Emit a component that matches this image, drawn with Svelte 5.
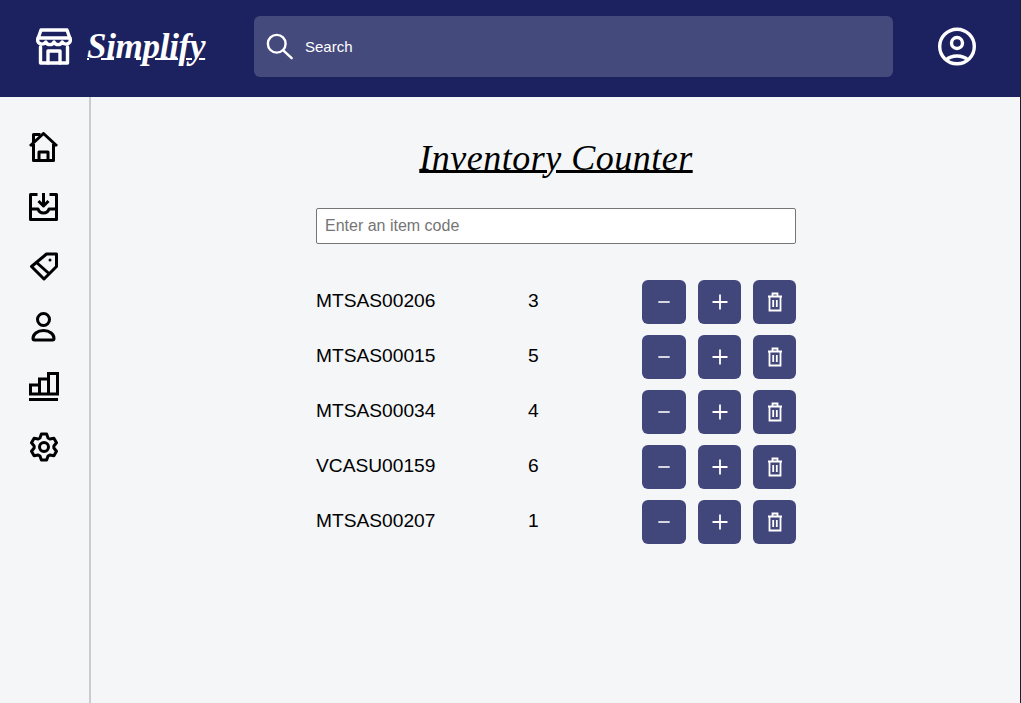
<script>
  const items = [
    { code: "MTSAS00206", qty: 3 },
    { code: "MTSAS00015", qty: 5 },
    { code: "MTSAS00034", qty: 4 },
    { code: "VCASU00159", qty: 6 },
    { code: "MTSAS00207", qty: 1 }
  ];

  // six-tooth cog outline, centred on 15,15
  function cog() {
    let d = "";
    for (let i = 0; i < 6; i++) {
      const a = (i * 60 - 90) * Math.PI / 180;
      const pts = [[-0.42, 9.9], [-0.2, 13.2], [0.2, 13.2], [0.42, 9.9]];
      for (const [off, r] of pts) {
        const x = 15 + r * Math.cos(a + off);
        const y = 15 + r * Math.sin(a + off);
        d += (d ? "L" : "M") + x.toFixed(2) + " " + y.toFixed(2);
      }
    }
    return d + "Z";
  }
</script>

<div class="page">
  <header class="topbar">
    <div class="brand">
      <svg class="store" viewBox="0 0 36 37" fill="none" stroke="currentColor" stroke-width="3.4" stroke-linejoin="round" stroke-linecap="round">
        <path d="M5 2h26l3.500 10a4.500 4.500 0 0 1-8.300 2a4.500 4.500 0 0 1-8.200 0a4.500 4.500 0 0 1-8.200 0a4.500 4.500 0 0 1-8.300-2z"/>
        <path d="M2 10h32"/>
        <path d="M4.500 19v16h27V19"/>
        <path d="M12 35V23h12v12"/>
      </svg>
      <span class="logo">Simplify</span>
    </div>
    <div class="search">
      <svg class="search-icon" viewBox="0 0 30 30" fill="none" stroke="currentColor" stroke-width="2.600" stroke-linecap="round">
        <circle cx="11.500" cy="11.500" r="9.500"/>
        <path d="M18.500 18.500L27.500 27"/>
      </svg>
      <span>Search</span>
    </div>
    <svg class="account" viewBox="0 0 38 39" fill="none" stroke="currentColor" stroke-width="3.400">
      <circle cx="19" cy="19.500" r="17.300"/>
      <circle cx="19" cy="16" r="5.500"/>
      <path d="M8 33c3-3 7-4 11-4s8 1 11 4"/>
    </svg>
  </header>

  <div class="body">
    <nav class="sidebar">
      <svg viewBox="0 0 30 30" fill="none" stroke="currentColor" stroke-width="3" stroke-linejoin="round">
        <path d="M1 14L14.500 1.500L28 14"/>
        <path d="M4.500 10V2.500h7"/>
        <path d="M4.500 12v16.500h20V12"/>
        <path d="M10 28.500V20h9v8.500"/>
      </svg>
      <svg viewBox="0 0 30 30" fill="none" stroke="currentColor" stroke-width="3" stroke-linejoin="round">
        <path d="M8.500 2.500H1.500v25h26v-25H20.500"/>
        <path d="M1.500 17H9c1 3 3 4 5.500 4s4.500-1 5.500-4h7.500"/>
        <path d="M14.500 1v13M9.500 9l5 5l5-5"/>
      </svg>
      <svg viewBox="0 0 30 30" fill="none" stroke="currentColor" stroke-width="3" stroke-linejoin="round">
        <path d="M27.500 2v12.500L15 27L2.500 14.500L17.500 2z"/>
        <path d="M7 10L20.500 22"/>
        <circle cx="21" cy="8" r="1.500" fill="currentColor" stroke="none"/>
      </svg>
      <svg viewBox="0 0 30 30" fill="none" stroke="currentColor" stroke-width="3">
        <circle cx="14.500" cy="7.500" r="6"/>
        <path d="M4 26.500c0-4 4-8 10.500-8s10.500 4 10.500 8c0 1-.5 1.500-1.500 1.500h-18c-1 0-1.500-.5-1.500-1.500z"/>
      </svg>
      <svg viewBox="0 0 30 30" fill="none" stroke="currentColor" stroke-width="3">
        <path d="M1.500 22V13h9v9zM10.500 22V7h9v15zM19.500 22V1.500h9V22z"/>
        <path d="M0 27.500h29"/>
      </svg>
      <svg viewBox="0 0 30 30" fill="none" stroke="currentColor" stroke-width="3" stroke-linejoin="round">
        <path d={cog()}/>
        <circle cx="15" cy="15" r="4.500"/>
      </svg>
    </nav>

    <main class="content">
      <h1>Inventory Counter</h1>
      <div class="panel">
        <input type="text" placeholder="Enter an item code" />
        <ul>
          {#each items as item}
            <li>
              <span class="code">{item.code}</span>
              <span class="qty">{item.qty}</span>
              <div class="actions">
                <button class="wide" aria-label="Decrease">
                  <svg viewBox="0 0 16 16" fill="none" stroke="currentColor" stroke-width="1.800"><path d="M1.500 8h13"/></svg>
                </button>
                <button aria-label="Increase">
                  <svg viewBox="0 0 16 16" fill="none" stroke="currentColor" stroke-width="1.800"><path d="M.5 8h15M8 .5v15"/></svg>
                </button>
                <button aria-label="Delete">
                  <svg viewBox="0 0 16 20" fill="none" stroke="currentColor" stroke-width="1.800">
                    <path d="M1 4.500h14M2.500 4.500V18.500h11V4.500M5.500 4.500V1.500h5v3M6.200 8v7M9.800 8v7"/>
                  </svg>
                </button>
              </div>
            </li>
          {/each}
        </ul>
      </div>
    </main>
  </div>
</div>

<style>
  :global(body) {
    background: #f4f6f8;
    font-family: "Liberation Sans", Arial, sans-serif;
  }
  .page {
    height: 703px;
    display: flex;
    flex-direction: column;
    overflow: hidden;
    border-right: 1px solid #1a2030;
  }
  .topbar {
    height: 97px;
    flex: none;
    box-sizing: border-box;
    padding-bottom: 4px;
    background: #1c2260;
    color: #fff;
    display: flex;
    align-items: center;
  }
  .brand {
    width: 254px;
    flex: none;
    padding-left: 36px;
    box-sizing: border-box;
    display: flex;
    align-items: center;
    gap: 15px;
  }
  .store {
    width: 36px;
    height: 37px;
    flex: none;
  }
  .logo {
    font-family: "Liberation Serif", serif;
    font-style: italic;
    font-weight: 700;
    font-size: 35px;
    line-height: 44px;
    text-decoration: underline;
    text-decoration-thickness: 2px;
    text-underline-offset: 0;
    letter-spacing: -0.3px;
  }
  .search {
    width: 639px;
    height: 61px;
    flex: none;
    background: #454a7d;
    border-radius: 6px;
    display: flex;
    align-items: center;
    box-sizing: border-box;
    padding-left: 12px;
    font-size: 15px;
    gap: 11px;
  }
  .search-icon {
    width: 28px;
    height: 30px;
  }
  .account {
    width: 38px;
    height: 39px;
    margin-left: 45px;
  }
  .body {
    flex: 1;
    display: flex;
  }
  .sidebar {
    width: 60px;
    flex: none;
    border-right: 2px solid #c8ccd1;
    padding: 35px 0 0 29px;
    display: flex;
    flex-direction: column;
    gap: 30px;
  }
  .sidebar svg {
    width: 30px;
    height: 30px;
    color: #000;
  }
  .content {
    flex: 1;
    padding-left: 1px;
    display: flex;
    flex-direction: column;
    align-items: center;
  }
  h1 {
    margin: 39px 0 0;
    font-family: "Liberation Serif", serif;
    font-style: italic;
    font-weight: 400;
    font-size: 36px;
    line-height: 44px;
    letter-spacing: 0.5px;
    color: #000;
    text-decoration: underline;
    text-decoration-thickness: 3px;
    text-underline-offset: 0;
  }
  .panel {
    width: 480px;
    margin-top: 28px;
  }
  input {
    display: block;
    width: 100%;
    height: 36px;
    box-sizing: border-box;
    border: 1px solid #767676;
    border-radius: 2px;
    padding: 0 8px;
    font: 16px "Liberation Sans", Arial, sans-serif;
    background: #fff;
  }
  input::placeholder {
    color: #757575;
  }
  ul {
    list-style: none;
    margin: 36px 0 0;
    padding: 0;
    display: flex;
    flex-direction: column;
    gap: 11px;
  }
  li {
    display: flex;
    align-items: center;
    height: 44px;
    font-size: 19.2px;
    color: #000;
  }
  .code {
    width: 212px;
    padding-bottom: 2px;
  }
  .qty {
    flex: 1;
    padding-bottom: 2px;
  }
  .actions {
    display: flex;
    gap: 12px;
  }
  button {
    width: 43px;
    height: 44px;
    padding: 0;
    border: 0;
    border-radius: 6px;
    background: #42477b;
    color: #fff;
    display: flex;
    align-items: center;
    justify-content: center;
  }
  button.wide {
    width: 44px;
  }
  button svg {
    width: 16px;
    height: 16px;
  }
  button.wide svg {
    width: 14px;
  }
  button:last-child svg {
    width: 16px;
    height: 20px;
  }
</style>
